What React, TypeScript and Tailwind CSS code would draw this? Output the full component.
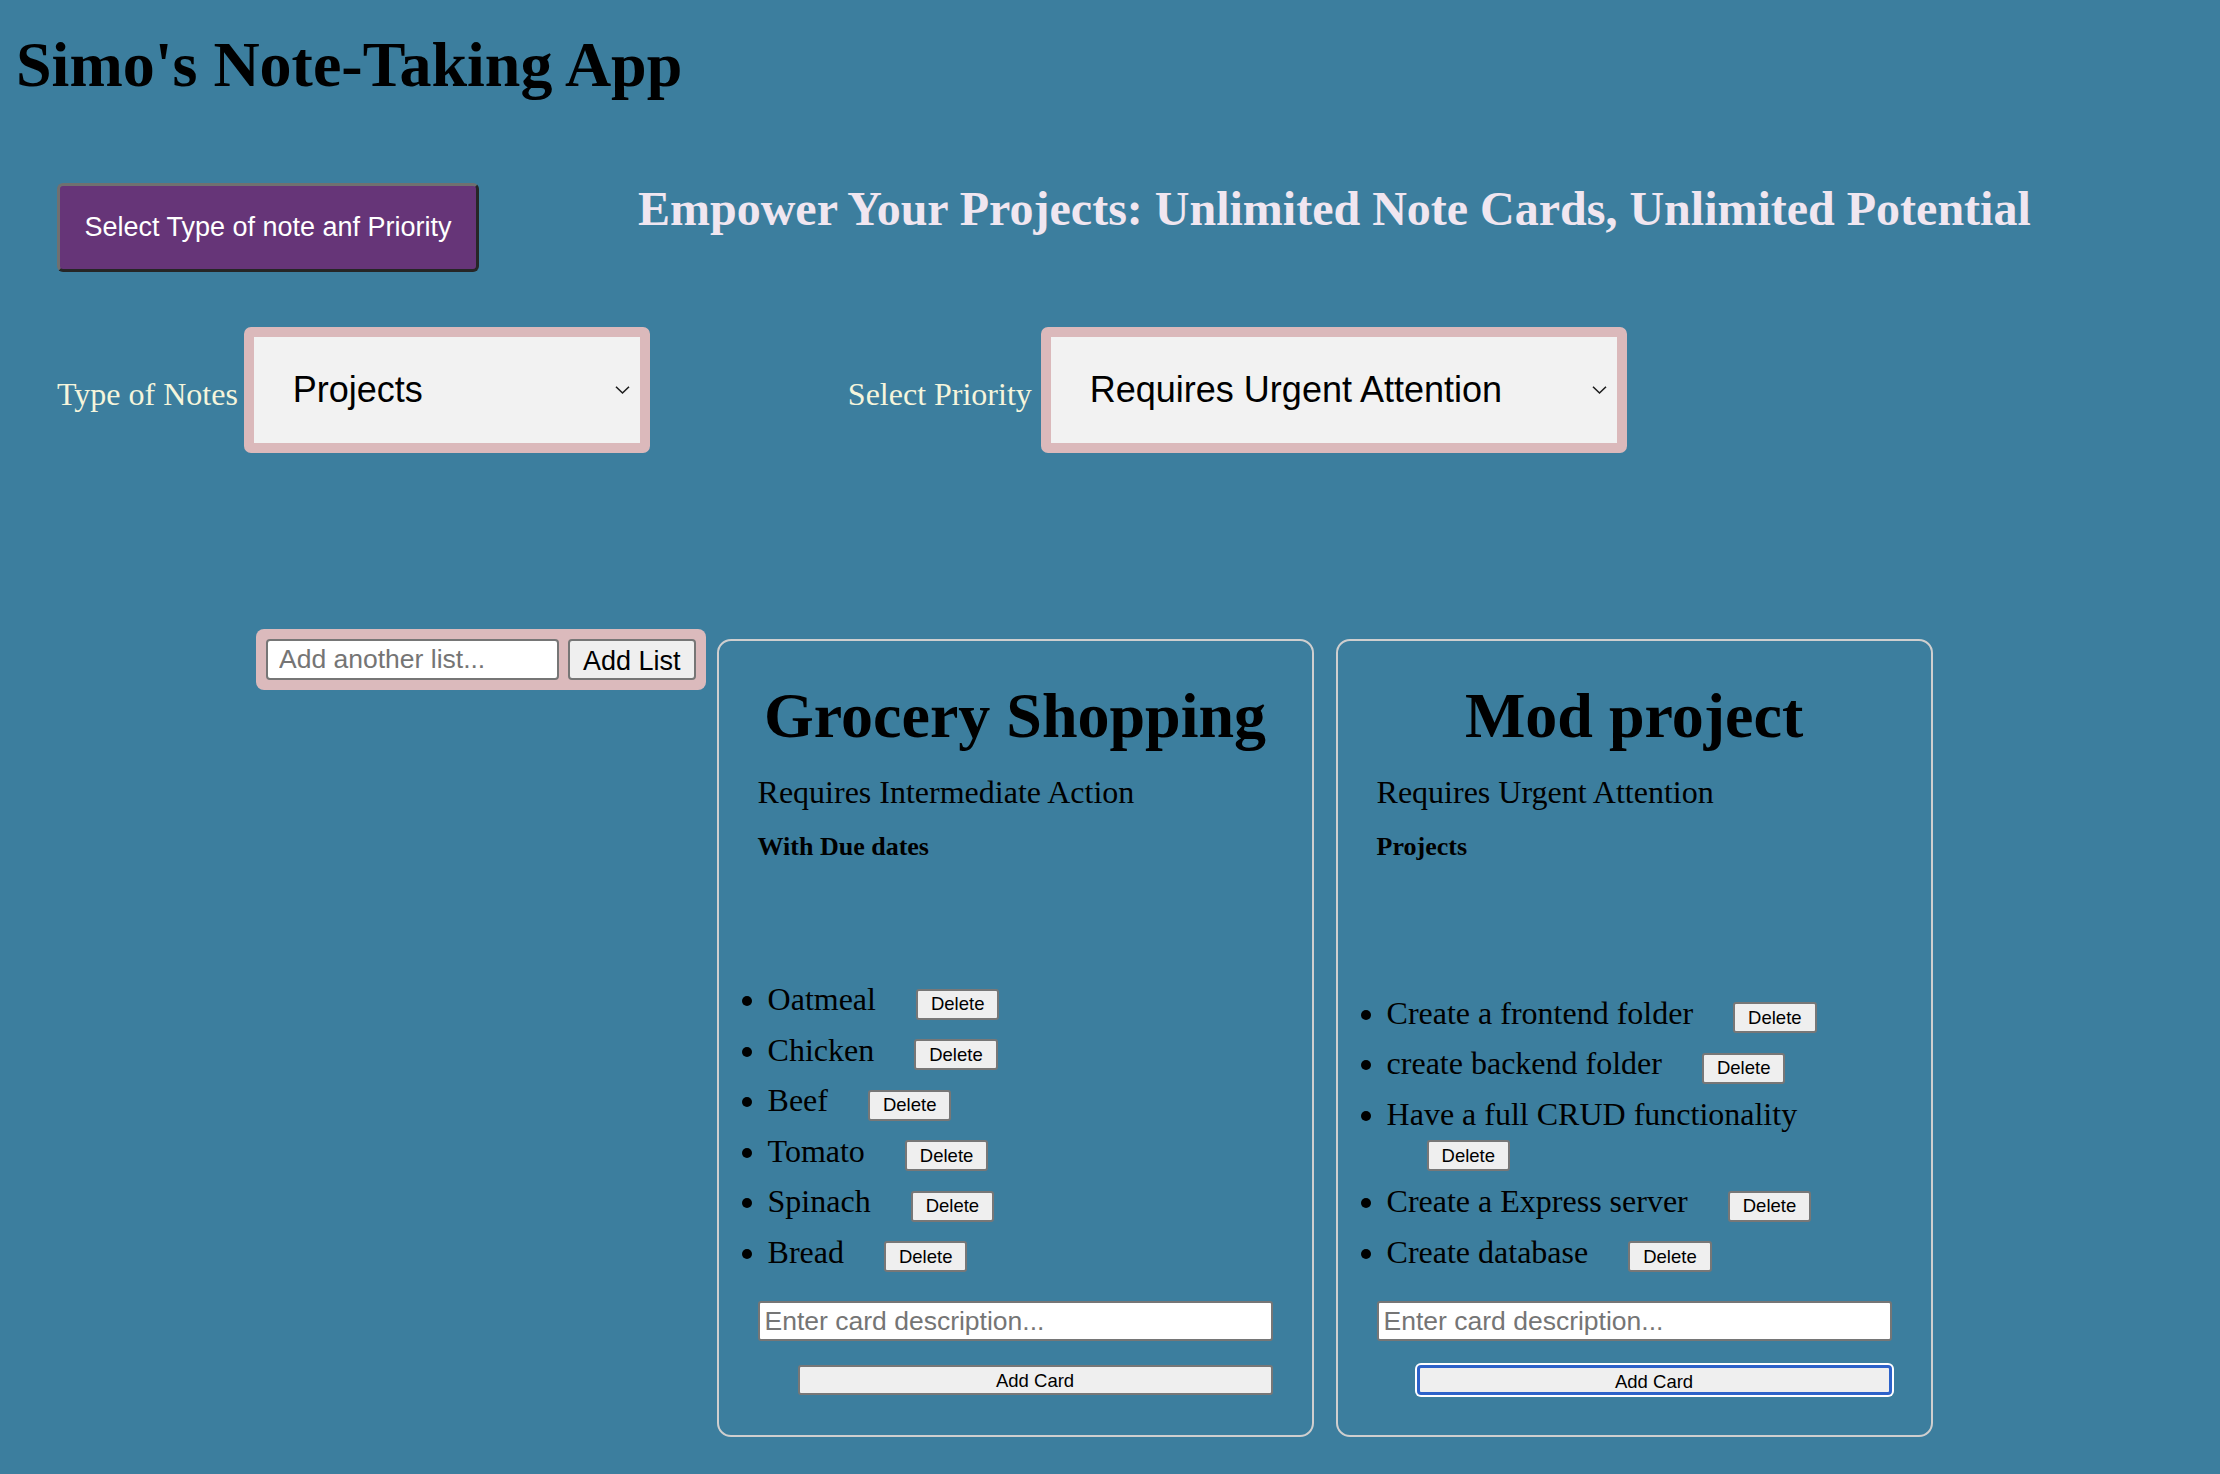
const SERIF = "font-['Liberation_Serif','Times_New_Roman',serif]";
const SANS = "font-['Liberation_Sans',Arial,sans-serif]";

const LISTS = [
  {
    title: "Grocery Shopping",
    priority: "Requires Intermediate Action",
    kind: "With Due dates",
    items: ["Oatmeal", "Chicken", "Beef", "Tomato", "Spinach", "Bread"],
    focused: false,
  },
  {
    title: "Mod project",
    priority: "Requires Urgent Attention",
    kind: "Projects",
    items: [
      "Create a frontend folder",
      "create backend folder",
      "Have a full CRUD functionality",
      "Create a Express server",
      "Create database",
    ],
    focused: true,
  },
];

function Chevron() {
  return (
    <svg
      width="15"
      height="9"
      viewBox="0 0 15 9"
      className="pointer-events-none absolute right-[20px] top-1/2 -translate-y-1/2"
    >
      <path d="M1 1.2 L7.5 7.5 L14 1.2" fill="none" stroke="#1f1f1f" strokeWidth="1.6" />
    </svg>
  );
}

function FakeSelect({ value, options, width }: { value: string; options: string[]; width: string }) {
  return (
    <div className="relative">
      <select
        defaultValue={value}
        className={`${SANS} ${width} h-[126px] appearance-none rounded-[7px] border-[10px] border-[#dbb9bb] bg-[#f2f2f2] pl-[39px] text-[36px] text-black outline-none`}
      >
        {options.map((o) => (
          <option key={o}>{o}</option>
        ))}
      </select>
      <Chevron />
    </div>
  );
}

function ListCard({ list }: { list: (typeof LISTS)[number] }) {
  return (
    <div className="mt-[10px] flex h-[798px] w-[597px] flex-col rounded-[14px] border-2 border-[#cfcfcf] px-[39px] pb-[40px] pt-[38px] text-black">
      <h2 className={`${SERIF} text-center text-[64px] font-bold leading-[74px]`}>{list.title}</h2>
      <p className={`${SERIF} mt-[21px] text-[32px] leading-[37px]`}>{list.priority}</p>
      <p className={`${SERIF} mt-[21px] text-[26px] font-bold leading-[30px]`}>{list.kind}</p>

      <ul className={`${SERIF} mt-auto mb-[29px] list-disc pl-[10px] text-[32px]`}>
        {list.items.map((item) => (
          <li key={item} className="mb-[12px] leading-[37px] last:mb-0">
            {item}
            <button
              className={`${SANS} ml-10 inline-block h-[31px] rounded-[3px] border-2 border-[#777] bg-[#efefef] px-[13px] align-baseline text-[18.5px] leading-[22px] text-black`}
            >
              Delete
            </button>
          </li>
        ))}
      </ul>

      <input
        placeholder="Enter card description..."
        className={`${SANS} h-[40px] w-full rounded-[3px] border-2 border-[#767676] bg-white pl-[5px] text-[26.5px] text-black outline-none placeholder:text-[#757575]`}
      />
      {list.focused ? (
        <button
          className={`${SANS} ml-10 mt-[24px] h-[30px] rounded-[4px] border-[3px] border-[#2d62c9] bg-[#efefef] text-[18.5px] text-black shadow-[0_0_0_2px_#ffffff]`}
        >
          Add Card
        </button>
      ) : (
        <button
          className={`${SANS} ml-10 mt-[24px] h-[30px] rounded-[3px] border-2 border-[#777] bg-[#efefef] text-[18.5px] text-black`}
        >
          Add Card
        </button>
      )}
    </div>
  );
}

export default function App() {
  return (
    <div className="min-h-screen bg-[#3c7e9e] pb-[37px]">
      <h1 className={`${SERIF} pl-4 pt-[28px] text-[64px] font-bold leading-[74px] text-black`}>
        Simo's Note-Taking App
      </h1>

      <div className="mt-[81px] flex items-start pl-[57px]">
        <button
          className={`${SANS} h-[89px] w-[422px] rounded-[6px] border-[3px] border-b-[#262626] border-l-[#707070] border-r-[#262626] border-t-[#707070] bg-[#663578] text-[27px] text-white`}
        >
          Select Type of note anf Priority
        </button>
        <h2 className={`${SERIF} ml-[159px] mt-[-2px] text-[48px] font-bold leading-[55px] text-[#f0e6f0]`}>
          Empower Your Projects: Unlimited Note Cards, Unlimited Potential
        </h2>
      </div>

      <div className="mt-[55px] flex items-center pl-[57px]">
        <label className={`${SERIF} mt-[8px] text-[32px] leading-[37px] text-[#f5f5dc]`}>Type of Notes</label>
        <div className="ml-[6px]">
          <FakeSelect value="Projects" options={["Projects", "With Due dates", "Personal"]} width="w-[406px]" />
        </div>
        <label className={`${SERIF} ml-[198px] mt-[8px] text-[32px] leading-[37px] text-[#f5f5dc]`}>
          Select Priority
        </label>
        <div className="ml-[9px]">
          <FakeSelect
            value="Requires Urgent Attention"
            options={["Requires Urgent Attention", "Requires Intermediate Action", "Low Priority"]}
            width="w-[586px]"
          />
        </div>
      </div>

      <div className="mt-[176px] flex items-start gap-[11px] pl-[256px]">
        <div className="flex items-center gap-[9px] rounded-[8px] bg-[#dbbabc] p-[10px]">
          <input
            placeholder="Add another list..."
            className={`${SANS} h-[41px] w-[293px] rounded-[4px] border-2 border-[#767676] bg-white pl-[11px] text-[26.5px] text-black outline-none placeholder:text-[#757575]`}
          />
          <button
            className={`${SANS} h-[41px] rounded-[4px] border-2 border-[#767676] bg-[#efefef] px-[13px] text-[27px] text-black`}
          >
            Add List
          </button>
        </div>
        <div className="flex items-start gap-[22px]">
          {LISTS.map((list) => (
            <ListCard key={list.title} list={list} />
          ))}
        </div>
      </div>
    </div>
  );
}
